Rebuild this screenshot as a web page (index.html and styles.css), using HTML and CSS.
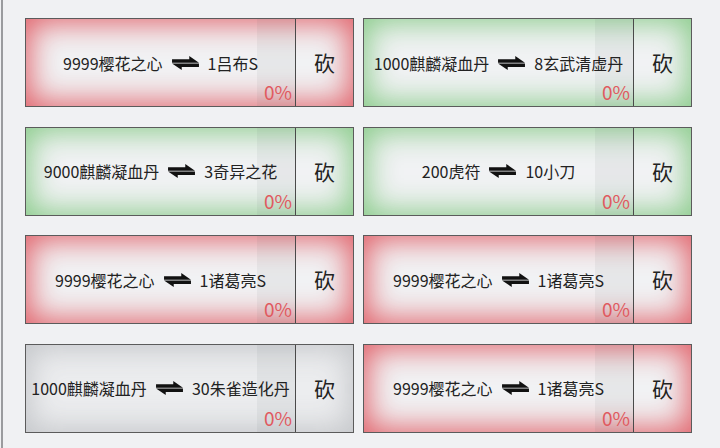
FILE: index.html
```html
<!DOCTYPE html>
<html lang="zh">
<head>
<meta charset="utf-8">
<link rel="stylesheet" href="styles.css">
</head>
<body>
<div class="page">
  <div class="grid">
    <div class="card red">
      <div class="main"><div class="band"></div><div class="pair"><span>9999樱花之心</span><svg class="swap" viewBox="0 0 25 13"><path d="M0 3H16V0L25 6.2H0Z M25 7V10.2H9V13L0 7Z"/></svg><span>1吕布S</span></div><div class="pct">0%</div></div>
      <div class="btn">砍</div>
    </div>
    <div class="card green">
      <div class="main"><div class="band"></div><div class="pair"><span>1000麒麟凝血丹</span><svg class="swap" viewBox="0 0 25 13"><path d="M0 3H16V0L25 6.2H0Z M25 7V10.2H9V13L0 7Z"/></svg><span>8玄武清虚丹</span></div><div class="pct">0%</div></div>
      <div class="btn">砍</div>
    </div>
    <div class="card green">
      <div class="main"><div class="band"></div><div class="pair"><span>9000麒麟凝血丹</span><svg class="swap" viewBox="0 0 25 13"><path d="M0 3H16V0L25 6.2H0Z M25 7V10.2H9V13L0 7Z"/></svg><span>3奇异之花</span></div><div class="pct">0%</div></div>
      <div class="btn">砍</div>
    </div>
    <div class="card green">
      <div class="main"><div class="band"></div><div class="pair"><span>200虎符</span><svg class="swap" viewBox="0 0 25 13"><path d="M0 3H16V0L25 6.2H0Z M25 7V10.2H9V13L0 7Z"/></svg><span>10小刀</span></div><div class="pct">0%</div></div>
      <div class="btn">砍</div>
    </div>
    <div class="card red">
      <div class="main"><div class="band"></div><div class="pair"><span>9999樱花之心</span><svg class="swap" viewBox="0 0 25 13"><path d="M0 3H16V0L25 6.2H0Z M25 7V10.2H9V13L0 7Z"/></svg><span>1诸葛亮S</span></div><div class="pct">0%</div></div>
      <div class="btn">砍</div>
    </div>
    <div class="card red">
      <div class="main"><div class="band"></div><div class="pair"><span>9999樱花之心</span><svg class="swap" viewBox="0 0 25 13"><path d="M0 3H16V0L25 6.2H0Z M25 7V10.2H9V13L0 7Z"/></svg><span>1诸葛亮S</span></div><div class="pct">0%</div></div>
      <div class="btn">砍</div>
    </div>
    <div class="card gray">
      <div class="main"><div class="band"></div><div class="pair"><span>1000麒麟凝血丹</span><svg class="swap" viewBox="0 0 25 13"><path d="M0 3H16V0L25 6.2H0Z M25 7V10.2H9V13L0 7Z"/></svg><span>30朱雀造化丹</span></div><div class="pct">0%</div></div>
      <div class="btn">砍</div>
    </div>
    <div class="card red">
      <div class="main"><div class="band"></div><div class="pair"><span>9999樱花之心</span><svg class="swap" viewBox="0 0 25 13"><path d="M0 3H16V0L25 6.2H0Z M25 7V10.2H9V13L0 7Z"/></svg><span>1诸葛亮S</span></div><div class="pct">0%</div></div>
      <div class="btn">砍</div>
    </div>
  </div>
</div>
</body>
</html>
```

FILE: styles.css
```css
html, body {
  margin: 0;
  padding: 0;
  background: #f0f1f3;
}
body {
  font-family: "Noto Sans CJK SC", "Noto Sans", sans-serif;
  color: #222;
}
.page {
  width: 720px;
  height: 448px;
  box-sizing: border-box;
  border-left: 2px solid #9a9b9e;
  border-right: 1px solid #dcdde0;
  margin-left: 1px;
  padding: 18px 0 0 22px;
  overflow: hidden;
}
.grid {
  display: grid;
  grid-template-columns: 329px 329px;
  grid-auto-rows: 89px;
  column-gap: 9px;
  row-gap: 19.5px;
}
.card {
  display: flex;
  box-sizing: border-box;
  border: 1px solid #5b5b5b;
  background: #f1f2f4;
}
.card.red { box-shadow: inset 0 0 30px 4px rgba(224, 84, 92, 0.92); }
.card.green { box-shadow: inset 0 0 30px 4px rgba(128, 200, 128, 0.92); }
.card.gray { box-shadow: inset 0 0 30px 4px rgba(188, 190, 194, 0.85); background: #ecedef; }
.main {
  width: 269px;
  display: grid;
  border-right: 1px solid #4a4a4a;
}
.main > * { grid-area: 1 / 1; }
.band {
  justify-self: end;
  width: 38px;
  background: rgba(90, 95, 100, 0.07);
}
.pair {
  align-self: center;
  justify-self: center;
  display: flex;
  align-items: center;
  gap: 9px;
  font-size: 16px;
  white-space: nowrap;
  line-height: 20px;
}
.swap {
  width: 27px;
  height: 14px;
  fill: #111;
}
.pct {
  justify-self: end;
  align-self: end;
  font-size: 19px;
  line-height: 19px;
  color: #e05a60;
  padding: 0 3px 5px 0;
}
.btn {
  flex: 1;
  display: flex;
  align-items: center;
  justify-content: center;
  font-size: 21px;
  color: #222;
  padding-bottom: 1px;
}
```
